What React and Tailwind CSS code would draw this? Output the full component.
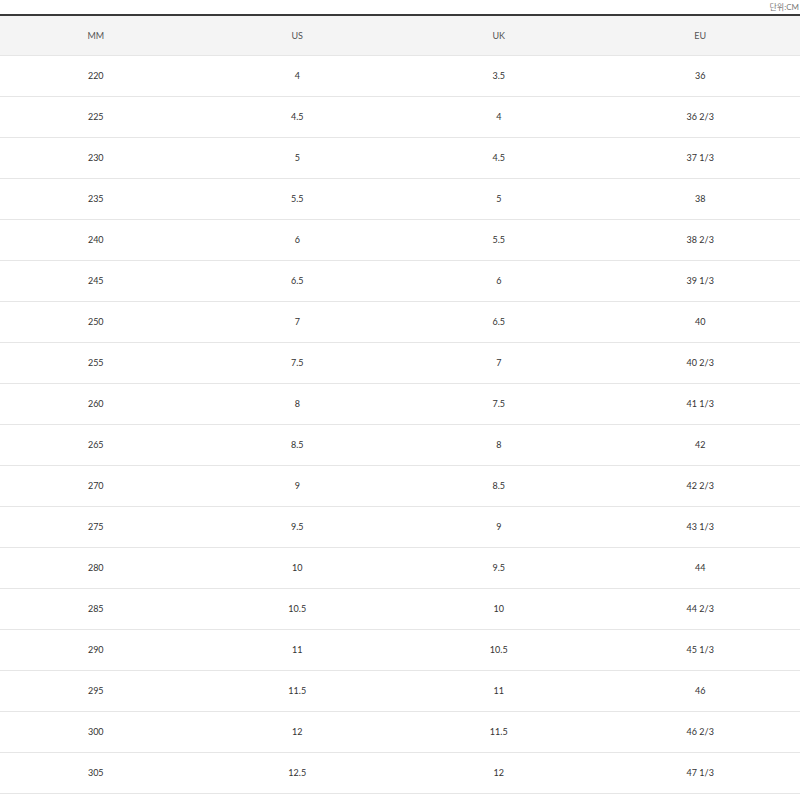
const rows = [
  ["220", "4", "3.5", "36"],
  ["225", "4.5", "4", "36 2/3"],
  ["230", "5", "4.5", "37 1/3"],
  ["235", "5.5", "5", "38"],
  ["240", "6", "5.5", "38 2/3"],
  ["245", "6.5", "6", "39 1/3"],
  ["250", "7", "6.5", "40"],
  ["255", "7.5", "7", "40 2/3"],
  ["260", "8", "7.5", "41 1/3"],
  ["265", "8.5", "8", "42"],
  ["270", "9", "8.5", "42 2/3"],
  ["275", "9.5", "9", "43 1/3"],
  ["280", "10", "9.5", "44"],
  ["285", "10.5", "10", "44 2/3"],
  ["290", "11", "10.5", "45 1/3"],
  ["295", "11.5", "11", "46"],
  ["300", "12", "11.5", "46 2/3"],
  ["305", "12.5", "12", "47 1/3"],
];

const SizeTable = () => {
  return (
    <div className="w-[800px] h-[800px] overflow-hidden bg-white font-['Lato','Noto_Sans_CJK_KR',sans-serif]">
      <div className="h-[14px] flex justify-end items-center pr-[1px]">
        <span className="text-[8px] text-[#777] leading-none">단위:CM</span>
      </div>
      <div className="w-[806px] -ml-[5px] border-t-2 border-[#3a3a3a]">
        <div className="grid grid-cols-4 h-[40px] bg-[#f4f4f4] border-b border-[#e6e6e6] items-center text-center text-[9px] text-[#555]">
          <div>MM</div>
          <div>US</div>
          <div>UK</div>
          <div>EU</div>
        </div>
        {rows.map((r) => (
          <div key={r[0]} className="grid grid-cols-4 h-[41px] border-b border-[#e6e6e6] items-center text-center text-[9px] text-[#333]">
            {r.map((v, i) => (
              <div key={i}>{v}</div>
            ))}
          </div>
        ))}
      </div>
    </div>
  );
};

export default function App() {
  return <SizeTable />;
}
